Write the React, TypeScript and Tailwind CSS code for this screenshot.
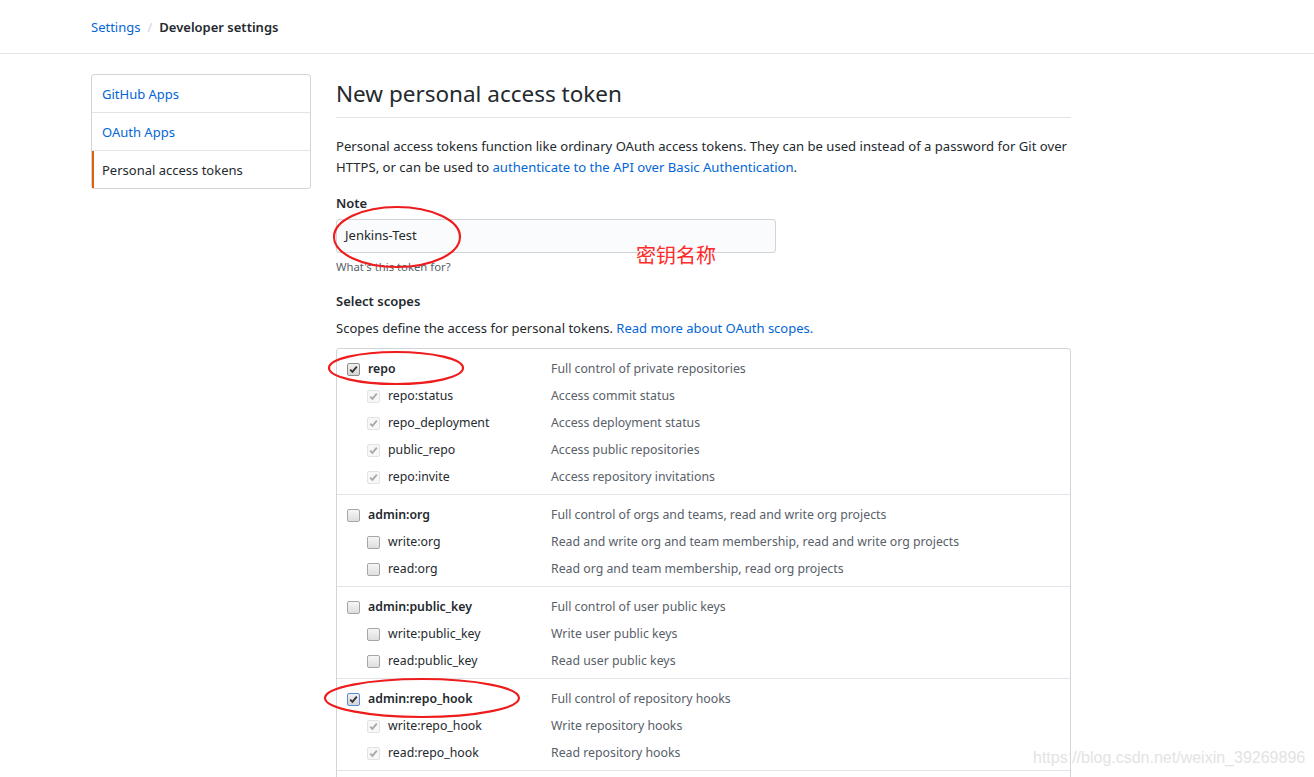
import React from 'react';

type Box = 'on' | 'onFocus' | 'sub' | 'off';

interface Scope {
  name: string;
  desc: string;
  box: Box;
  sub?: boolean;
}

const groups: Scope[][] = [
  [
    { name: 'repo', desc: 'Full control of private repositories', box: 'on' },
    { name: 'repo:status', desc: 'Access commit status', box: 'sub', sub: true },
    { name: 'repo_deployment', desc: 'Access deployment status', box: 'sub', sub: true },
    { name: 'public_repo', desc: 'Access public repositories', box: 'sub', sub: true },
    { name: 'repo:invite', desc: 'Access repository invitations', box: 'sub', sub: true },
  ],
  [
    { name: 'admin:org', desc: 'Full control of orgs and teams, read and write org projects', box: 'off' },
    { name: 'write:org', desc: 'Read and write org and team membership, read and write org projects', box: 'off', sub: true },
    { name: 'read:org', desc: 'Read org and team membership, read org projects', box: 'off', sub: true },
  ],
  [
    { name: 'admin:public_key', desc: 'Full control of user public keys', box: 'off' },
    { name: 'write:public_key', desc: 'Write user public keys', box: 'off', sub: true },
    { name: 'read:public_key', desc: 'Read user public keys', box: 'off', sub: true },
  ],
  [
    { name: 'admin:repo_hook', desc: 'Full control of repository hooks', box: 'onFocus' },
    { name: 'write:repo_hook', desc: 'Write repository hooks', box: 'sub', sub: true },
    { name: 'read:repo_hook', desc: 'Read repository hooks', box: 'sub', sub: true },
  ],
];

const Check = ({ color }: { color: string }) => (
  <svg width="9" height="9" viewBox="0 0 9 9" className="absolute left-[1px] top-[1px]">
    <path d="M1.2 4.6 L3.4 6.8 L7.8 1.6" fill="none" stroke={color} strokeWidth="1.8" />
  </svg>
);

const CheckBox = ({ kind }: { kind: Box }) => {
  if (kind === 'sub') {
    return (
      <span className="relative block w-[13px] h-[13px] rounded-[2px] border border-[#e3e3e3] bg-[#f7f7f7] shrink-0">
        <Check color="#a8a8a8" />
      </span>
    );
  }
  if (kind === 'off') {
    return (
      <span className="relative block w-[13px] h-[13px] rounded-[2px] border border-[#a6a6a6] bg-gradient-to-b from-[#f6f6f6] to-[#dedede] shrink-0" />
    );
  }
  return (
    <span
      className={`relative block w-[13px] h-[13px] rounded-[2px] border shrink-0 bg-gradient-to-b from-[#f0f0f0] to-[#d4d4d4] ${
        kind === 'onFocus' ? 'border-[#5a8ad8]' : 'border-[#8e8e8e]'
      }`}
    >
      <Check color="#333333" />
    </span>
  );
};

const ScopeRow = ({ s }: { s: Scope }) => (
  <div className="flex items-center h-[27px] text-[12.3px]">
    <div className={`flex items-center w-[214px] ${s.sub ? 'pl-[30px]' : 'pl-[10px]'}`}>
      <CheckBox kind={s.box} />
      <span className={`ml-[8px] text-[#24292e] ${s.sub ? '' : 'font-semibold'}`}>{s.name}</span>
    </div>
    <span className="text-[#586069]">{s.desc}</span>
  </div>
);

export default function App() {
  return (
    <div className="relative h-[777px] overflow-hidden bg-white text-[#24292e]" style={{ fontFamily: '"Noto Sans", "Noto Sans CJK SC", sans-serif' }}>
      <header className="h-[54px] border-b border-[#e1e4e8]">
        <div className="ml-[91px] pt-[16px] flex items-center text-[13px] leading-[22px]">
          <a className="text-[#0366d6]">Settings</a>
          <span className="mx-[7px] text-[#d1d5da]">/</span>
          <span className="font-semibold">Developer settings</span>
        </div>
      </header>

      <div className="ml-[91px] w-[980px] pt-[20px] flex gap-[25px]">
        <nav className="w-[220px] shrink-0 self-start border border-[#d1d5da] rounded-[3px] text-[13px]">
          <div className="h-[38px] flex items-center pt-[2px] px-[10px] border-b border-[#e1e4e8] text-[#0366d6]">GitHub Apps</div>
          <div className="h-[38px] flex items-center pt-[2px] px-[10px] border-b border-[#e1e4e8] text-[#0366d6]">OAuth Apps</div>
          <div className="h-[37px] flex items-center pt-[2px] pl-[8px] pr-[10px] border-l-2 border-[#e36209] text-[#24292e]">Personal access tokens</div>
        </nav>

        <main className="w-[735px]">
          <h1 className="mt-[5px] pb-[8px] border-b border-[#e1e4e8] text-[22.5px] leading-[30px] font-normal">New personal access token</h1>
          <p className="mt-[18px] text-[13.1px] leading-[21px]">
            Personal access tokens function like ordinary OAuth access tokens. They can be used instead of a password for Git over
            <br />
            HTTPS, or can be used to <a className="text-[#0366d6]">authenticate to the API over Basic Authentication</a>.
          </p>

          <div className="mt-[15px] text-[13px] leading-[20px] font-semibold">Note</div>
          <div className="mt-[6px] w-[440px] h-[34px] border border-[#d1d5da] rounded-[3px] bg-[#fafbfc] flex items-center px-[8px] text-[13px]">
            Jenkins-Test
          </div>
          <div className="mt-[6px] text-[11.3px] leading-[16px] text-[#586069]">What's this token for?</div>

          <div className="mt-[16px] text-[13px] leading-[20px] font-semibold">Select scopes</div>
          <p className="mt-[7px] text-[13px] leading-[20px]">
            Scopes define the access for personal tokens. <a className="text-[#0366d6]">Read more about OAuth scopes.</a>
          </p>

          <div className="mt-[10px] border border-[#d1d5da] rounded-[3px]">
            {groups.map((g, i) => (
              <div key={i} className={`pt-[7px] pb-[3px] ${i > 0 ? 'border-t border-[#e1e4e8]' : ''}`}>
                {g.map((s) => (
                  <ScopeRow key={s.name} s={s} />
                ))}
              </div>
            ))}
            <div className="h-[40px] border-t border-[#e1e4e8]" />
          </div>
        </main>
      </div>

      {/* red annotations drawn over the screenshot */}
      <svg className="absolute left-0 top-0 pointer-events-none" width="1314" height="777">
        <ellipse cx="397" cy="237" rx="63" ry="30" fill="none" stroke="#ee1c1c" strokeWidth="2.2" />
        <ellipse cx="396" cy="368" rx="67" ry="16" fill="none" stroke="#ee1c1c" strokeWidth="2.2" />
        <ellipse cx="422" cy="698" rx="97" ry="19" fill="none" stroke="#ee1c1c" strokeWidth="2.2" />
      </svg>
      <div className="absolute left-[636px] top-[242px] text-[20px] leading-[26px] text-[#ff2a2a]" style={{ fontFamily: '"Noto Sans CJK SC", sans-serif' }}>
        密钥名称
      </div>
      <div className="absolute left-[1033px] top-[748px] text-[16px] leading-[20px] text-[#e3e3e3]" style={{ fontFamily: '"Liberation Sans", sans-serif' }}>
        https://blog.csdn.net/weixin_39269896
      </div>
    </div>
  );
}
